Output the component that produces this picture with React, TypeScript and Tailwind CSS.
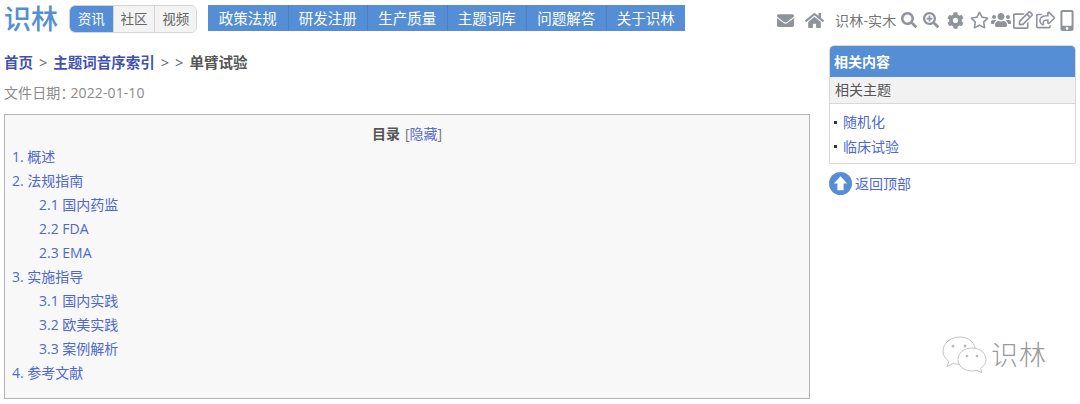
import { FaEnvelope, FaHome, FaSearch, FaSearchPlus, FaCog, FaRegStar, FaUsers, FaRegEdit, FaRegShareSquare, FaMobileAlt } from 'react-icons/fa'

const tabs = ['社区', '视频']
const navItems = ['政策法规', '研发注册', '生产质量', '主题词库', '问题解答', '关于识林']

const toc = [
  { label: '1. 概述' },
  { label: '2. 法规指南' },
  { label: '2.1 国内药监', sub: true },
  { label: '2.2 FDA', sub: true },
  { label: '2.3 EMA', sub: true },
  { label: '3. 实施指导' },
  { label: '3.1 国内实践', sub: true },
  { label: '3.2 欧美实践', sub: true },
  { label: '3.3 案例解析', sub: true },
  { label: '4. 参考文献' },
]

export default function App() {
  return (
    <div className="relative w-[1080px] h-[404px] overflow-hidden bg-white font-['Open_Sans','Noto_Sans_CJK_SC',sans-serif] text-[14px] text-[#555]">
      {/* Top bar */}
      <header className="flex h-[36px] items-start pl-[4px]">
        <div className="w-[65px] text-[27px] leading-[38px] font-medium text-[#558ed5]">识林</div>

        <div className="mt-[5px] flex h-[28px] w-[128px] overflow-hidden rounded-[6px] border border-[#d4d4d4] text-[13.5px] leading-[26px]">
          <span className="w-[43px] bg-[#558ed5] text-center text-white">资讯</span>
          {tabs.map(t => (
            <span key={t} className="w-[42px] border-l border-[#d4d4d4] bg-[#f3f3f3] text-center text-[#666]">{t}</span>
          ))}
        </div>

        <nav className="mt-[5px] ml-[11px] flex h-[26px] bg-[#558ed5] text-[14.5px] leading-[27px] text-white">
          {navItems.map((n, i) => (
            <span key={n} className={`w-[79.5px] text-center ${i > 0 ? 'border-l border-[#4a80c4]' : ''}`}>{n}</span>
          ))}
        </nav>

        <div className="ml-[91px] mt-[8px] flex h-[24px] items-center text-[#8f949c]">
          <FaEnvelope className="h-[17px] w-[19px]" />
          <FaHome className="ml-[10px] h-[17px] w-[19px]" />
          <span className="ml-[11px] text-[14px] tracking-[0.2px] text-[#777]">识林-实木</span>
          <FaSearch className="ml-[4px] h-[16px] w-[16px]" />
          <FaSearchPlus className="ml-[6px] h-[16px] w-[16px]" />
          <FaCog className="ml-[8px] h-[17px] w-[17px]" />
          <FaRegStar className="ml-[6px] h-[18px] w-[19px]" />
          <FaUsers className="ml-[2px] h-[18px] w-[20px]" />
          <FaRegEdit className="ml-[2px] h-[18px] w-[20px]" />
          <FaRegShareSquare className="ml-[3px] h-[18px] w-[19px]" />
          <FaMobileAlt className="ml-[5px] h-[21px] w-[14px]" />
        </div>
      </header>

      <div className="flex pl-[4px]">
        {/* Main column */}
        <main className="w-[806px]">
          <div className="mt-[17px] flex h-[20px] text-[14.5px] leading-[20px] font-semibold">
            <a className="text-[#3f51b5]">首页</a>
            <span className="mx-[6px] font-normal text-[#666]">&gt;</span>
            <a className="text-[#3f51b5]">主题词音序索引</a>
            <span className="ml-[6px] font-normal text-[#666]">&gt;</span>
            <span className="mx-[6px] font-normal text-[#666]">&gt;</span>
            <span>单臂试验</span>
          </div>
          <div className="mt-[10px] h-[20px] leading-[20px] tracking-[0.1px] text-[#8a8a8a]">
            <span className="mr-[-4px]">文件日期：</span>2022-01-10
          </div>

          <section className="mt-[11px] h-[285px] border border-[#b4b4b4] bg-[#f8f8f9] pt-[7px]">
            <div className="h-[24px] text-center leading-[24px]">
              <span className="font-semibold">目录</span>
              <span className="ml-[5px] text-[#5a6fd0]"><span className="text-[#777]">[</span>隐藏<span className="text-[#777]">]</span></span>
            </div>
            <ul className="pl-[7px] text-[#4e68cf]">
              {toc.map(item => (
                <li key={item.label} className={`h-[24px] leading-[22px] ${item.sub ? 'pl-[27px]' : ''}`}>{item.label}</li>
              ))}
            </ul>
          </section>
        </main>

        {/* Sidebar */}
        <aside className="ml-[19px] w-[247px] pt-[9px]">
          <div className="overflow-hidden rounded-t-[5px] border border-[#d8d8d8]">
            <div className="h-[31px] bg-[#558ed5] pl-[4px] font-semibold leading-[31px] text-white">相关内容</div>
            <div className="h-[27px] border-b border-[#d8d8d8] bg-[#f2f2f2] pl-[5px] leading-[26px] text-[#555]">相关主题</div>
            <ul className="h-[59px] pt-[6px] pl-[4px] text-[#4e68cf]">
              {['随机化', '临床试验'].map(s => (
                <li key={s} className="flex h-[24.5px] items-center leading-[24px]">
                  <span className="mr-[6px] h-[3px] w-[3px] bg-[#333]" />
                  {s}
                </li>
              ))}
            </ul>
          </div>
          <a className="mt-[8px] flex items-center text-[#4e68cf]">
            <svg viewBox="0 0 24 24" className="h-[23px] w-[23px]">
              <circle cx="12" cy="12" r="12" fill="#558ed5" />
              <path d="M12 4.500 19 12h-3.800v7H8.800v-7H5z" fill="#fff" />
            </svg>
            <span className="ml-[3px]">返回顶部</span>
          </a>
        </aside>
      </div>

      {/* WeChat watermark */}
      <div className="absolute left-[941px] top-[335px] flex items-center">
        <svg viewBox="0 0 46 40" className="h-[40px] w-[46px]" fill="#fff" stroke="#c4c4c4" strokeWidth="1">
          <path d="M19 2C9.600 2 2 8.200 2 16c0 4.200 2.200 7.800 5.800 10.400L6 31.500l6.200-3.100c2 .6 4.200 1 6.800 1 8.800 0 15.500-6 15.500-13.400C34.500 8.200 28 2 19 2z" />
          <path d="M31 13c-8 0-14 5-14 11.500S23 36 31 36c1.800 0 3.400-.3 5-.8l4.800 2.600-1.200-4.500c3.200-2.200 5.400-5 5.400-8.300C45 18 39 13 31 13z" />
          <circle cx="12" cy="11" r="1.500" fill="#bbb" stroke="none" />
          <circle cx="24" cy="11" r="1.500" fill="#bbb" stroke="none" />
          <circle cx="26" cy="21" r="1.300" fill="#bbb" stroke="none" />
          <circle cx="36" cy="21" r="1.300" fill="#bbb" stroke="none" />
        </svg>
        <span className="ml-[4px] text-[27px] font-extralight leading-[30px] tracking-[1px] text-[#999]">识林</span>
      </div>
    </div>
  )
}
